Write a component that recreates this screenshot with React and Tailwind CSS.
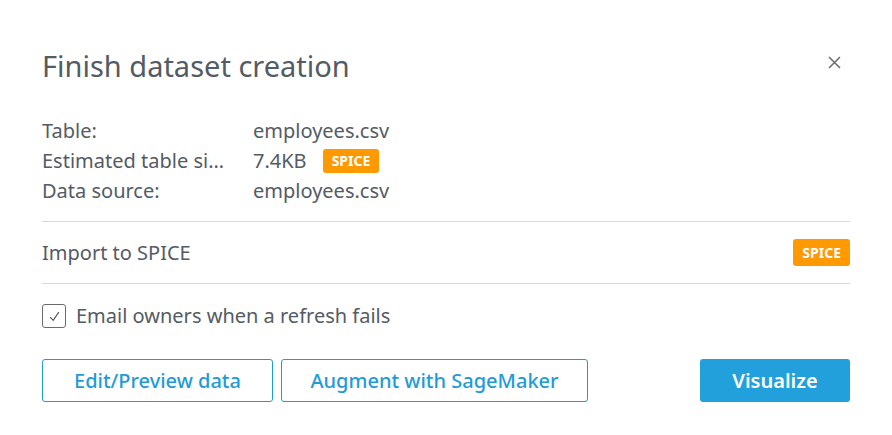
export default function App() {
  const font = { fontFamily: "'Noto Sans', 'Open Sans', sans-serif" };
  return (
    <div className="w-[892px] h-[435px] bg-white text-[#545b64]" style={font}>
      <div className="px-[42px] pt-[44px]">
        <div className="flex items-start justify-between">
          <h1 className="text-[29px] leading-[44px] text-[#545b64]">Finish dataset creation</h1>
          <button className="w-6 h-6 mt-[6px] mr-[4px] flex items-center justify-center text-[#6b6b6b]">
            <svg width="13" height="13" viewBox="0 0 13 13" fill="none" stroke="currentColor" strokeWidth="1.5">
              <path d="M1 1L12 12M12 1L1 12" />
            </svg>
          </button>
        </div>

        <div className="mt-[28px] text-[20px] leading-[30px]">
          <div className="flex">
            <div className="w-[211px]">Table:</div>
            <div>employees.csv</div>
          </div>
          <div className="flex items-center">
            <div className="w-[211px]">
              <div className="w-[185px] truncate">Estimated table size</div>
            </div>
            <div className="flex items-center gap-[16px]">
              <span>7.4KB</span>
              <span className="bg-[#ff9900] text-white text-[14px] font-bold leading-[24px] px-[9px] rounded-[3px]">SPICE</span>
            </div>
          </div>
          <div className="flex">
            <div className="w-[211px]">Data source:</div>
            <div>employees.csv</div>
          </div>
        </div>

        <div className="mt-[15px] border-t border-[#d5dbdb]" />
        <div className="flex items-center justify-between h-[61px]">
          <span className="text-[20px]">Import to SPICE</span>
          <span className="bg-[#ff9900] text-white text-[14px] font-bold leading-[27px] px-[9px] rounded-[3px]">SPICE</span>
        </div>
        <div className="border-t border-[#d5dbdb]" />

        <label className="flex items-center gap-[10px] mt-[19px]">
          <span className="w-[24px] h-[24px] border border-[#6b6b6b] rounded-[3px] flex items-center justify-center">
            <svg width="13" height="13" viewBox="0 0 12 12" fill="none" stroke="#555" strokeWidth="1.1">
              <path d="M2 6.5L4.8 9.5L10 2" />
            </svg>
          </span>
          <span className="text-[20px] leading-[26px]">Email owners when a refresh fails</span>
        </label>

        <div className="flex items-center mt-[30px]">
          <button className="w-[231px] h-[43px] border border-[#1f9bd8] rounded-[3px] text-[#1f9bd8] text-[20px] font-medium">Edit/Preview data</button>
          <button className="ml-[8px] w-[307px] h-[43px] border border-[#1f9bd8] rounded-[3px] text-[#1f9bd8] text-[20px] font-medium">Augment with SageMaker</button>
          <button className="ml-auto w-[150px] h-[43px] bg-[#21a0db] rounded-[3px] text-white text-[20px] font-semibold">Visualize</button>
        </div>
      </div>
    </div>
  );
}
